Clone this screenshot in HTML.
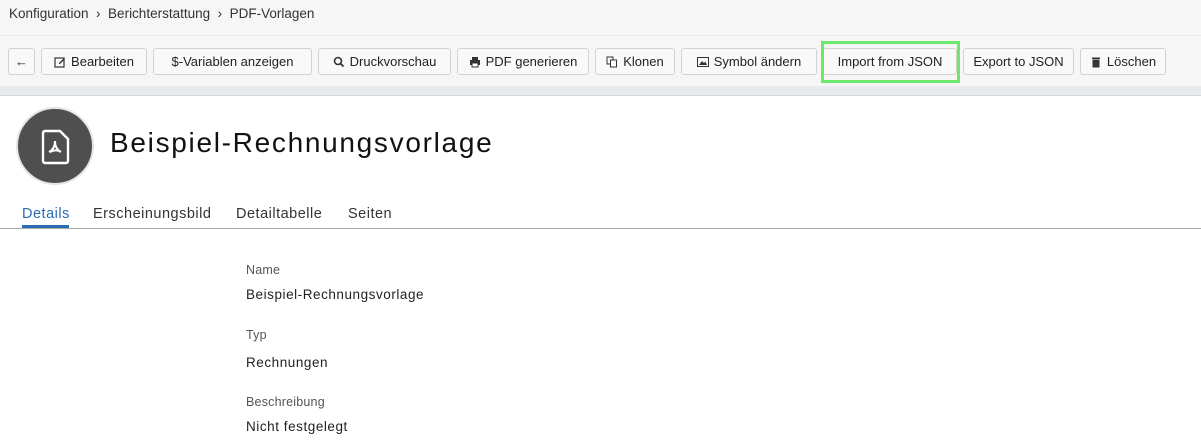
<!DOCTYPE html><html><head><style>
*{box-sizing:border-box;margin:0;padding:0}
body{width:1201px;height:448px;overflow:hidden;background:#fff;font-family:"Liberation Sans",sans-serif;color:#222;position:relative}
.top{position:absolute;left:0;top:0;width:1201px;height:86px;background:#f6f6f7}
.sep{position:absolute;left:0;top:35px;width:1201px;height:1px;background:#e8e8ea}
.band{position:absolute;left:0;top:86px;width:1201px;height:10px;background:#e9eaec;border-bottom:1px solid #d8d9db}
.bc{position:absolute;left:9px;top:6px;font-size:13.5px;color:#333}
.btn{position:absolute;top:48px;height:27px;border:1px solid #d2d2d4;border-radius:3px;background:#f9f9fa;font-size:13px;color:#222;display:flex;align-items:center;justify-content:center;gap:5px;white-space:nowrap}
.btn svg{width:12px;height:12px}
.hl{position:absolute;left:821px;top:41px;width:139px;height:42px;border:3px solid #6de86a}
.circle{position:absolute;left:16px;top:107px;width:78px;height:78px;border-radius:50%;background:#4f4f4f;border:2px solid #e4e4e4}
h1{position:absolute;left:110px;top:127px;font-size:28px;font-weight:normal;color:#111;letter-spacing:1.7px}
.tab{position:absolute;top:206px;font-size:14.5px;color:#333;letter-spacing:.5px}
.line{position:absolute;left:0;top:228px;width:1201px;height:1px;background:#a9a9a9}
.ul{position:absolute;left:22px;top:225px;width:47px;height:3px;background:#2a6db3}
.lbl{position:absolute;left:246px;font-size:12.5px;color:#555;letter-spacing:.2px}
.val{position:absolute;left:246px;font-size:13.5px;color:#222;letter-spacing:.55px}
</style></head><body>
<div class="top"></div><div class="sep"></div><div class="band"></div>
<div class="bc">Konfiguration &nbsp;›&nbsp; Berichterstattung &nbsp;›&nbsp; PDF-Vorlagen</div>
<div class="btn" style="left:8px;width:27px">←</div>
<div class="btn" style="left:41px;width:106px"><svg viewBox="0 0 12 12"><rect x="1" y="2" width="9" height="9" fill="none" stroke="#333" stroke-width="1.2"/><path d="M5 7l5-5 1 1-5 5H5z" fill="#333"/></svg>Bearbeiten</div>
<div class="btn" style="left:153px;width:159px">$-Variablen anzeigen</div>
<div class="btn" style="left:318px;width:133px"><svg viewBox="0 0 12 12"><circle cx="5" cy="5" r="3.5" fill="none" stroke="#333" stroke-width="1.6"/><path d="M7.5 7.5l3 3" stroke="#333" stroke-width="1.8"/></svg>Druckvorschau</div>
<div class="btn" style="left:457px;width:132px"><svg viewBox="0 0 12 12"><rect x="3" y="1" width="6" height="3" fill="#333"/><rect x="1" y="4" width="10" height="5" fill="#333"/><rect x="3" y="7" width="6" height="4" fill="#fff" stroke="#333"/></svg>PDF generieren</div>
<div class="btn" style="left:595px;width:80px"><svg viewBox="0 0 12 12"><rect x="1" y="1" width="6" height="7" fill="none" stroke="#333"/><rect x="4.5" y="4" width="6" height="7" fill="#fff" stroke="#333"/></svg>Klonen</div>
<div class="btn" style="left:681px;width:136px"><svg viewBox="0 0 12 12"><rect x="0.5" y="1.5" width="11" height="9" fill="none" stroke="#333"/><path d="M2 9l3-4 2 2 1.5-1.5L10 9z" fill="#333"/></svg>Symbol ändern</div>
<div class="btn" style="left:823px;width:134px">Import from JSON</div>
<div class="hl"></div>
<div class="btn" style="left:963px;width:111px">Export to JSON</div>
<div class="btn" style="left:1080px;width:86px"><svg viewBox="0 0 12 12"><rect x="2" y="1.5" width="8" height="1.5" fill="#333"/><rect x="2.5" y="3.5" width="7" height="8" fill="#333"/></svg>Löschen</div>
<div class="circle"><svg style="position:absolute;left:19px;top:18px" width="38" height="40" viewBox="0 0 38 40"><path d="M8 4h15l8 8v22a2 2 0 0 1-2 2H8a2 2 0 0 1-2-2V6a2 2 0 0 1 2-2z" fill="none" stroke="#fff" stroke-width="2.4"/><path d="M18 14c0 5 2 9 6 11M18 14c0 5-2 9-6 11M13 25c4-2 8-2 11 0" fill="none" stroke="#fff" stroke-width="2"/></svg></div>
<h1>Beispiel-Rechnungsvorlage</h1>
<div class="tab" style="left:22px;color:#2a6db3">Details</div>
<div class="tab" style="left:93px">Erscheinungsbild</div>
<div class="tab" style="left:236px">Detailtabelle</div>
<div class="tab" style="left:348px">Seiten</div>
<div class="line"></div><div class="ul"></div>
<div class="lbl" style="top:263px">Name</div>
<div class="val" style="top:287px">Beispiel-Rechnungsvorlage</div>
<div class="lbl" style="top:328px">Typ</div>
<div class="val" style="top:355px">Rechnungen</div>
<div class="lbl" style="top:395px">Beschreibung</div>
<div class="val" style="top:419px">Nicht festgelegt</div>
</body></html>
